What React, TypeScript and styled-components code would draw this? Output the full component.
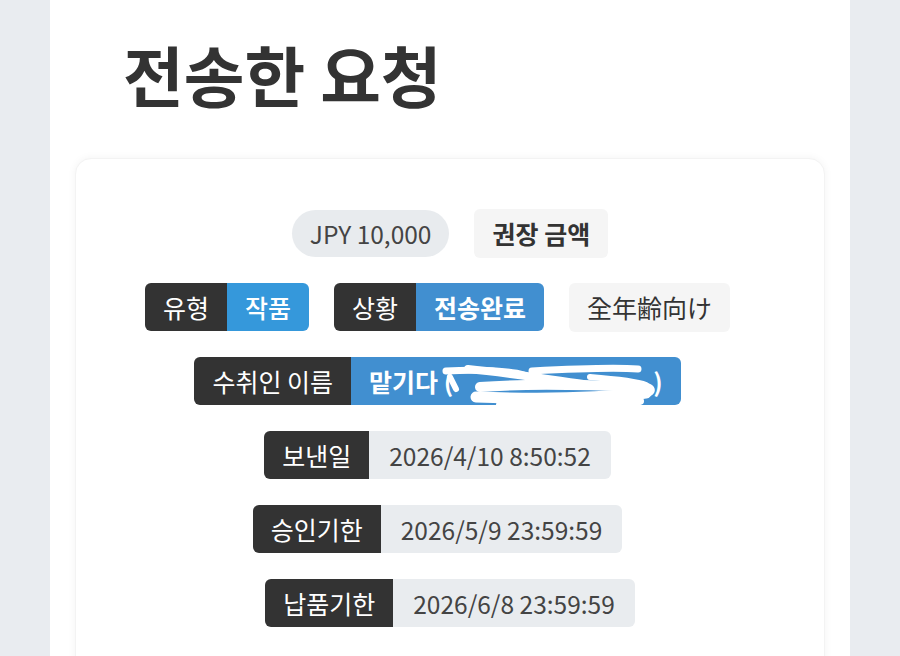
import React from "react";
import styled, { createGlobalStyle } from "styled-components";

const Global = createGlobalStyle`
  html, body { margin: 0; padding: 0; background: #e9ecf0; }
  body { font-family: "Noto Sans CJK KR", "Noto Sans", sans-serif; overflow: hidden; }
`;

const Page = styled.div`
  display: flex;
  justify-content: center;
  height: 656px;
  overflow: hidden;
`;

const Panel = styled.main`
  width: 800px;
  background: #ffffff;
  padding: 37px 25px 0;
  box-sizing: border-box;
`;

const Title = styled.h1`
  margin: 0 0 49px;
  padding-left: 48px;
  font-size: 66px;
  line-height: 72px;
  font-weight: 700;
  color: #333333;
`;

const Card = styled.section`
  background: #ffffff;
  border-radius: 16px;
  box-shadow: 0 0 8px rgba(0, 0, 0, 0.05);
  border: 1px solid #f3f3f3;
  padding: 50px 0 60px;
  display: flex;
  flex-direction: column;
  gap: 26px;
`;

const Row = styled.div<{ $trail?: boolean }>`
  display: flex;
  justify-content: center;
  align-items: center;
  gap: 25px;
  height: 48px;
  padding-right: ${(p) => (p.$trail ? "25px" : "0")};
`;

const Amount = styled.span`
  display: inline-flex;
  align-items: center;
  height: 47px;
  padding: 0 18px;
  border-radius: 24px;
  background: #e8ebee;
  color: #444;
  font-size: 24.5px;
`;

const Plain = styled.span<{ $bold?: boolean }>`
  display: inline-flex;
  align-items: center;
  height: 49px;
  padding: 0 18px;
  border-radius: 6px;
  background: #f5f5f5;
  color: #333;
  font-size: 25px;
  font-weight: ${(p) => (p.$bold ? 700 : 400)};
`;

const Pair = styled.span`
  display: inline-flex;
  height: 48px;
  border-radius: 6px;
  overflow: hidden;
  position: relative;
`;

const Key = styled.span`
  display: inline-flex;
  align-items: center;
  padding: 0 18px;
  background: #333333;
  color: #ffffff;
  font-size: 25px;
`;

const Val = styled.span<{ $tone: "cyan" | "blue" | "gray"; $bold?: number }>`
  display: inline-flex;
  align-items: center;
  padding: 0 ${(p) => (p.$tone === "gray" ? 20 : 18)}px;
  background: ${(p) =>
    p.$tone === "cyan" ? "#3598db" : p.$tone === "blue" ? "#418fd0" : "#e9ecef"};
  color: ${(p) => (p.$tone === "gray" ? "#444" : "#ffffff")};
  font-size: ${(p) => (p.$tone === "gray" ? 24.5 : 25)}px;
  font-weight: ${(p) => p.$bold ?? 400};
`;

const Hidden = styled.span`
  display: inline-block;
  width: 200px;
`;

const Scribble = styled.svg`
  position: absolute;
  left: 246px;
  top: 6px;
  width: 230px;
  height: 48px;
  pointer-events: none;
`;

export default function App() {
  return (
    <Page>
      <Global />
      <Panel>
        <Title>전송한 요청</Title>
        <Card>
          <Row>
            <Amount>JPY 10,000</Amount>
            <Plain $bold>권장 금액</Plain>
          </Row>
          <Row $trail>
            <Pair>
              <Key>유형</Key>
              <Val $tone="cyan" $bold={500}>작품</Val>
            </Pair>
            <Pair>
              <Key>상황</Key>
              <Val $tone="blue" $bold={700}>전송완료</Val>
            </Pair>
            <Plain>全年齢向け</Plain>
          </Row>
          <Row $trail>
            <Pair>
              <Key>수취인 이름</Key>
              <Val $tone="blue" $bold={700}>
                맡기다 (<Hidden />)
              </Val>
              <Scribble viewBox="0 0 230 48">
                <g fill="none" stroke="#ffffff" strokeLinecap="round" strokeLinejoin="round">
                  <path d="M6 8 C40 6, 70 8, 84 12" strokeWidth="7" />
                  <path d="M28 6 C70 10, 120 18, 150 22" strokeWidth="8" />
                  <path d="M92 8 C130 6, 170 4, 198 6" strokeWidth="7" />
                  <path d="M40 24 C90 20, 150 22, 200 24 C215 25, 212 30, 196 32" strokeWidth="10" />
                  <path d="M36 34 C90 36, 150 36, 206 30" strokeWidth="11" />
                  <path d="M60 42 C110 44, 160 42, 200 38" strokeWidth="8" />
                  <path d="M10 14 L16 26" strokeWidth="6" />
                  <path d="M150 14 C175 16, 196 18, 206 22" strokeWidth="6" />
                </g>
              </Scribble>
            </Pair>
          </Row>
          <Row $trail>
            <Pair>
              <Key>보낸일</Key>
              <Val $tone="gray">2026/4/10 8:50:52</Val>
            </Pair>
          </Row>
          <Row $trail>
            <Pair>
              <Key>승인기한</Key>
              <Val $tone="gray">2026/5/9 23:59:59</Val>
            </Pair>
          </Row>
          <Row>
            <Pair>
              <Key>납품기한</Key>
              <Val $tone="gray">2026/6/8 23:59:59</Val>
            </Pair>
          </Row>
        </Card>
      </Panel>
    </Page>
  );
}
